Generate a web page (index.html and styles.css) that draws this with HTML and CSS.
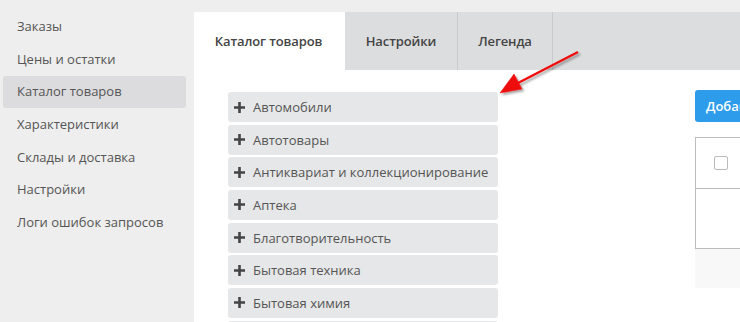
FILE: index.html
```html
<!DOCTYPE html>
<html lang="ru">
<head>
<meta charset="utf-8">
<link rel="stylesheet" href="styles.css">
</head>
<body>
<div class="layout">
  <nav class="sidebar">
    <a class="nav-item">Заказы</a>
    <a class="nav-item">Цены и остатки</a>
    <a class="nav-item active">Каталог товаров</a>
    <a class="nav-item">Характеристики</a>
    <a class="nav-item">Склады и доставка</a>
    <a class="nav-item">Настройки</a>
    <a class="nav-item">Логи ошибок запросов</a>
  </nav>
  <main class="main">
    <div class="tabs">
      <div class="tab tab-catalog active">Каталог товаров</div>
      <div class="tab tab-settings">Настройки</div>
      <div class="tab tab-legend">Легенда</div>
    </div>
    <div class="content">
      <ul class="cats">
        <li class="cat"><svg class="plus" viewBox="0 0 11 11"><path d="M4.2 0h2.6v4.2H11v2.6H6.8V11H4.2V6.8H0V4.2h4.2z"/></svg>Автомобили</li>
        <li class="cat"><svg class="plus" viewBox="0 0 11 11"><path d="M4.2 0h2.6v4.2H11v2.6H6.8V11H4.2V6.8H0V4.2h4.2z"/></svg>Автотовары</li>
        <li class="cat"><svg class="plus" viewBox="0 0 11 11"><path d="M4.2 0h2.6v4.2H11v2.6H6.8V11H4.2V6.8H0V4.2h4.2z"/></svg>Антиквариат и коллекционирование</li>
        <li class="cat"><svg class="plus" viewBox="0 0 11 11"><path d="M4.2 0h2.6v4.2H11v2.6H6.8V11H4.2V6.8H0V4.2h4.2z"/></svg>Аптека</li>
        <li class="cat"><svg class="plus" viewBox="0 0 11 11"><path d="M4.2 0h2.6v4.2H11v2.6H6.8V11H4.2V6.8H0V4.2h4.2z"/></svg>Благотворительность</li>
        <li class="cat"><svg class="plus" viewBox="0 0 11 11"><path d="M4.2 0h2.6v4.2H11v2.6H6.8V11H4.2V6.8H0V4.2h4.2z"/></svg>Бытовая техника</li>
        <li class="cat"><svg class="plus" viewBox="0 0 11 11"><path d="M4.2 0h2.6v4.2H11v2.6H6.8V11H4.2V6.8H0V4.2h4.2z"/></svg>Бытовая химия</li>
        <li class="cat"></li>
      </ul>
      <div class="panel">
        <button class="btn">Добавить</button>
        <div class="table">
          <div class="row head"><span class="check"></span></div>
          <div class="row body"></div>
        </div>
        <div class="footer"></div>
      </div>
    </div>
  </main>
</div>
<svg class="arrow" width="120" height="80" viewBox="0 0 120 80">
  <defs>
    <filter id="sh" x="-20%" y="-20%" width="150%" height="150%">
      <feDropShadow dx="2" dy="2" stdDeviation="1.2" flood-color="#000" flood-opacity="0.35"/>
    </filter>
  </defs>
  <g filter="url(#sh)" fill="#ee1111" stroke="#ee1111">
    <line x1="98" y1="12" x2="36" y2="44" stroke-width="2.4"/>
    <polygon points="20,53 34,34 42,49" stroke-width="0.5"/>
  </g>
</svg>
</body>
</html>
```

FILE: styles.css
```css
* { box-sizing: border-box; }
html, body { margin: 0; padding: 0; }
body {
  background: #eeeeee;
  font-family: "Open Sans", "Noto Sans", sans-serif;
  font-size: 13px;
  color: #555;
  width: 740px;
  height: 322px;
  overflow: hidden;
  position: relative;
}
.layout {
  display: flex;
  height: 322px;
}
.sidebar {
  width: 194px;
  flex: none;
  padding: 11px 8px 0 3px;
  display: flex;
  flex-direction: column;
  gap: 1px;
}
.nav-item {
  display: block;
  height: 31.65px;
  line-height: 30px;
  padding-left: 14px;
  border-radius: 3px;
  color: #555;
  white-space: nowrap;
}
.nav-item.active { background: #dcdcde; }
.main {
  flex: 1;
  margin-top: 12px;
  background: #fff;
  overflow: hidden;
  min-width: 0;
}
.tabs {
  display: flex;
  height: 58px;
  background: #dcdddf;
}
.tab {
  flex: none;
  height: 58px;
  line-height: 58px;
  text-align: center;
  font-weight: 600;
  color: #444;
  border-right: 1px solid #c9cacc;
  white-space: nowrap;
  letter-spacing: -0.1px;
}
.tab-catalog { width: 151px; padding-right: 2px; }
.tab-settings { width: 113px; }
.tab-legend { width: 95px; }
.tab.active { background: #fff; border-right: none; }
.content {
  display: flex;
  padding: 22px 0 0 34px;
}
.cats {
  list-style: none;
  margin: 0;
  padding: 0;
  width: 270px;
  flex: none;
  display: flex;
  flex-direction: column;
  gap: 2.67px;
}
.cat {
  height: 30px;
  flex: none;
  display: flex;
  align-items: center;
  background: #e6e7e8;
  border-radius: 3px;
  padding-left: 6px;
  color: #555;
  white-space: nowrap;
}
.plus {
  width: 11px;
  height: 11px;
  fill: #444;
  margin-right: 8px;
  flex: none;
}
.panel {
  margin-left: 197px;
  flex: none;
  width: 400px;
  display: flex;
  flex-direction: column;
}
.btn {
  align-self: flex-start;
  height: 32px;
  margin-top: -2px;
  padding: 0 11px;
  border: none;
  border-radius: 3px;
  background: #2d9ceb;
  color: #fff;
  font-family: inherit;
  font-size: 13px;
  font-weight: 600;
}
.table {
  margin-top: 15px;
  border: 1px solid #bcbcbc;
}
.row.head {
  height: 51px;
  border-bottom: 1px solid #bcbcbc;
  display: flex;
  align-items: center;
  padding-left: 18px;
}
.row.body { height: 59px; }
.check {
  width: 14px;
  height: 14px;
  border: 1px solid #bbb;
  border-radius: 2px;
  background: #fff;
}
.footer {
  height: 39px;
  background: #f8f8f8;
}
.arrow {
  position: absolute;
  left: 480px;
  top: 40px;
}
```
